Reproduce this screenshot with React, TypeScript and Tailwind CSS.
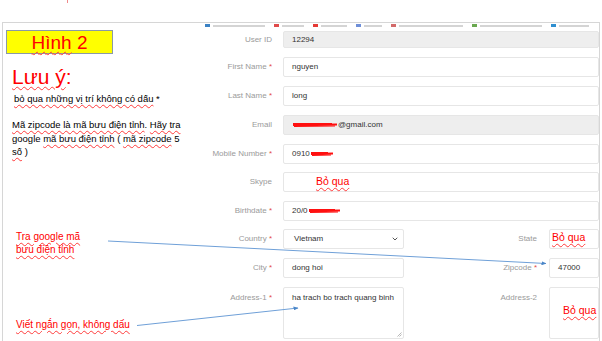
import { ChevronDown } from 'lucide-react';
import type { ReactNode } from 'react';

const squiggle = 'underline decoration-wavy decoration-[#ff3b3b] decoration-1 underline-offset-2';

function Scribble({ width }: { width: number }) {
  return (
    <svg width={width} height={8} viewBox={`0 0 ${width} 8`} className="inline-block align-middle">
      <path
        d={`M1 4 L${width - 1} 3.5 M2 5 L${width - 3} 4.5 M1 3 L${width - 6} 3`}
        stroke="#ff1010"
        strokeWidth={1.8}
        fill="none"
      />
    </svg>
  );
}

function Label({ text, required, top }: { text: string; required?: boolean; top?: boolean }) {
  return (
    <div
      className={`flex h-full justify-end text-[8px] text-[#9a9a9a] ${top ? 'items-start pt-[5px]' : 'items-center'}`}
    >
      <span>
        {text}
        {required && <span className="text-[#e34b4b]"> *</span>}
      </span>
    </div>
  );
}

function Field({ children, muted, className = '' }: { children?: ReactNode; muted?: boolean; className?: string }) {
  return (
    <div
      className={`flex h-full items-center rounded-[2px] border border-[#e6e6e6] pl-[8px] text-[8px] text-[#333] ${
        muted ? 'bg-[#eeeeee]' : 'bg-white'
      } ${className}`}
    >
      {children}
    </div>
  );
}

function Row({
  label,
  required,
  muted,
  children,
  className = 'mt-[9px] h-[20px]',
}: {
  label: string;
  required?: boolean;
  muted?: boolean;
  children?: ReactNode;
  className?: string;
}) {
  return (
    <div className={`flex ${className}`}>
      <div className="h-full w-[72px] shrink-0">
        <Label text={label} required={required} />
      </div>
      <div className="ml-[11px] h-full flex-1">
        <Field muted={muted}>{children}</Field>
      </div>
    </div>
  );
}

const bookmarks = [
  { color: 'bg-[#3b82c4]', w: 'w-[52px]' },
  { color: 'bg-[#e04b4b]', w: 'w-[22px]' },
  { color: 'bg-[#e53935]', w: 'w-[26px]' },
  { color: 'bg-[#6f8fd8]', w: 'w-[18px]' },
  { color: 'bg-[#d36a6a]', w: 'w-[64px]' },
  { color: 'bg-[#6aa84f]', w: 'w-[62px]' },
  { color: 'bg-[#2f8fd0]', w: 'w-[30px]' },
];

export default function App() {
  return (
    <div className="relative h-[341px] w-[602px] overflow-hidden bg-white font-['Liberation_Sans',Arial,sans-serif]">
      <div className="h-[22px]">
        <div className="ml-[67px] h-[3px] w-[1px] bg-[#f08a8a]" />
      </div>

      <div className="mx-[2px] flex h-[319px] border-l border-r border-t border-[#d6d6d6]">
        {/* slide notes */}
        <div className="w-[197px] shrink-0 text-[#ff0000]">
          <div className="ml-[3px] mt-[7px] flex h-[24px] w-[107px] items-center justify-center border border-[#8a9aa6] bg-[#ffff00] text-[19px] leading-none">
            <span className={squiggle}>Hình</span>&nbsp;2
          </div>
          <div className="ml-[9px] mt-[11px] text-[21px] leading-[24px]">
            <span className={squiggle}>Lưu ý</span>:
          </div>
          <div className="ml-[11px] mt-[3px] text-[9.5px] leading-[13px] text-black">
            {' '}
            <span className={squiggle}>bỏ qua những vị trí không có dấu</span> *
          </div>
          <div className="ml-[9px] mt-[13px] w-[179px] text-[9.5px] leading-[13.5px] text-black">
            <span className={squiggle}>Mã zipcode là mã bưu điện tỉnh</span>.{' '}
            <span className={squiggle}>Hãy tra</span> google{' '}
            <span className={squiggle}>mã bưu điện tỉnh</span> ({' '}
            <span className={squiggle}>mã zipcode</span> 5 <span className={squiggle}>số</span> )
          </div>
          <div className="ml-[13px] mt-[71px] w-[80px] text-[10px] leading-[13px]">
            <span className={squiggle}>Tra google mã bưu điện tỉnh</span>
          </div>
          <div className="ml-[13px] mt-[62px] text-[10px] leading-[13px]">
            <span className={squiggle}>Viết ngắn gọn, không dấu</span>
          </div>
        </div>

        {/* embedded form screenshot */}
        <div className="flex-1 overflow-hidden">
          <div className="flex h-[8px] items-start gap-[9px] overflow-hidden pl-[5px]">
            {bookmarks.map((b, i) => (
              <div key={i} className="flex items-center gap-[3px] pt-[1px]">
                <div className={`h-[3px] w-[5px] ${b.color}`} />
                <div className={`h-[2px] ${b.w} bg-[#d4d4d4]`} />
              </div>
            ))}
          </div>

          <Row label="User ID" muted className="h-[17px]">
            12294
          </Row>
          <Row label="First Name" required>
            nguyen
          </Row>
          <Row label="Last Name" required>
            long
          </Row>
          <Row label="Email" muted>
            <Scribble width={46} />
            <span>@gmail.com</span>
          </Row>
          <Row label="Mobile Number" required>
            <span>0910</span>
            <Scribble width={24} />
          </Row>
          <Row label="Skype" className="mt-[8px] h-[20px]">
            <span className={`ml-[24px] text-[10.5px] text-[#ff0000] ${squiggle}`}>Bỏ qua</span>
          </Row>
          <Row label="Birthdate" required>
            <span>20/0</span>
            <Scribble width={33} />
          </Row>

          <div className="mt-[8px] flex h-[20px]">
            <div className="h-full w-[72px] shrink-0">
              <Label text="Country" required />
            </div>
            <div className="ml-[11px] h-full w-[121px]">
              <Field className="justify-between pr-[4px]">
                <span className="ml-[2px]">Vietnam</span>
                <ChevronDown size={8} strokeWidth={3} className="text-[#555]" />
              </Field>
            </div>
            <div className="h-full w-[133px] shrink-0">
              <Label text="State" />
            </div>
            <div className="ml-[12px] h-full flex-1">
              <div className="h-full rounded-[2px] border border-[#e6e6e6] pl-[2px] text-[10.5px] leading-[15px] text-[#ff0000]">
                <span className={squiggle}>Bỏ qua</span>
              </div>
            </div>
          </div>

          <div className="mt-[9px] flex h-[20px]">
            <div className="h-full w-[72px] shrink-0">
              <Label text="City" required />
            </div>
            <div className="ml-[11px] h-full w-[121px]">
              <Field>dong hoi</Field>
            </div>
            <div className="h-full w-[133px] shrink-0">
              <Label text="Zipcode" required />
            </div>
            <div className="ml-[12px] h-full flex-1">
              <Field>47000</Field>
            </div>
          </div>

          <div className="mt-[9px] flex h-[52px]">
            <div className="h-full w-[72px] shrink-0">
              <Label text="Address-1" required top />
            </div>
            <div className="relative ml-[11px] h-full w-[121px] rounded-[2px] border border-[#e6e6e6] pl-[8px] pt-[4px] text-[8px] text-[#333]">
              ha trach bo trach quang binh
              <svg width="5" height="5" viewBox="0 0 5 5" className="absolute bottom-[1px] right-[1px]">
                <path d="M4.5 0.5 L0.5 4.5 M4.5 2.5 L2.5 4.5" stroke="#999" strokeWidth="0.7" />
              </svg>
            </div>
            <div className="h-full w-[133px] shrink-0">
              <Label text="Address-2" top />
            </div>
            <div className="ml-[12px] h-full flex-1 rounded-[2px] border border-[#e6e6e6] pl-[13px] pt-[15px] text-[10.5px] text-[#ff0000]">
              <span className={squiggle}>Bỏ qua</span>
            </div>
          </div>
        </div>
      </div>

      {/* annotation arrows */}
      <svg className="pointer-events-none absolute left-0 top-0" width="602" height="341" viewBox="0 0 602 341">
        <defs>
          <marker id="ah" markerWidth="5" markerHeight="4" refX="4.5" refY="2" orient="auto" markerUnits="userSpaceOnUse">
            <path d="M0 0 L5 2 L0 4 z" fill="#4a86c8" />
          </marker>
        </defs>
        <line x1="108" y1="241" x2="546" y2="263.5" stroke="#6fa0d8" strokeWidth="1" markerEnd="url(#ah)" />
        <line x1="137" y1="325.5" x2="298" y2="308" stroke="#6fa0d8" strokeWidth="1" markerEnd="url(#ah)" />
      </svg>
    </div>
  );
}
